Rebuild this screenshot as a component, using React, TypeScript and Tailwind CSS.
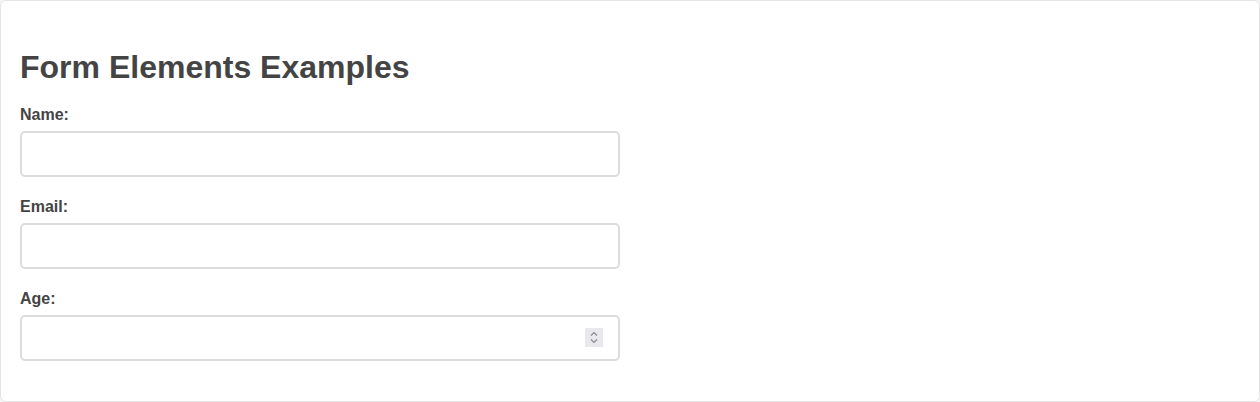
const fields = [
    { id: 'name', label: 'Name:', type: 'text' },
    { id: 'email', label: 'Email:', type: 'email' },
    { id: 'age', label: 'Age:', type: 'number' },
];

function Spinner() {
    // stand-in for the browser's number spin buttons
    return (
        <span className="absolute right-[17px] top-[13px] w-[18px] h-[19px] bg-[#e9e9ed] flex flex-col items-center justify-center gap-[3px] pointer-events-none">
            <svg viewBox="0 0 8 5" className="w-[8px] h-[5px]" fill="none">
                <path d="M1 4.5L4 1.5L7 4.5" stroke="#8a8a8a" strokeWidth={1.2} />
            </svg>
            <svg viewBox="0 0 8 5" className="w-[8px] h-[5px]" fill="none">
                <path d="M1 0.5L4 3.5L7 0.5" stroke="#8a8a8a" strokeWidth={1.2} />
            </svg>
        </span>
    );
}

export default function App() {
    return (
        <div className="bg-[#f4f4f4] font-['Liberation_Sans',Arial,sans-serif] text-[#444]">
            <div className="bg-white border border-[#e4e4e4] rounded-md pl-[19px] pr-5 pt-5 pb-[19px]">
                <h1 className="text-[32px] font-bold leading-[37px] mt-[28px] mb-[20px]">
                    Form Elements Examples
                </h1>
                <form>
                    {fields.map((f) => (
                        <div key={f.id} className="mb-[21px]">
                            <label htmlFor={f.id} className="block text-[16px] font-bold leading-[18px] mb-[7px]">
                                {f.label}
                            </label>
                            <div className="relative w-[600px]">
                                <input
                                    id={f.id}
                                    type={f.type}
                                    className="block w-full h-[46px] px-3 border-2 border-[#dddddd] rounded-[5px] bg-white text-[16px] outline-none [appearance:textfield] [&::-webkit-inner-spin-button]:appearance-none [&::-webkit-outer-spin-button]:appearance-none"
                                />
                                {f.type === 'number' && <Spinner />}
                            </div>
                        </div>
                    ))}
                </form>
            </div>
        </div>
    );
}
